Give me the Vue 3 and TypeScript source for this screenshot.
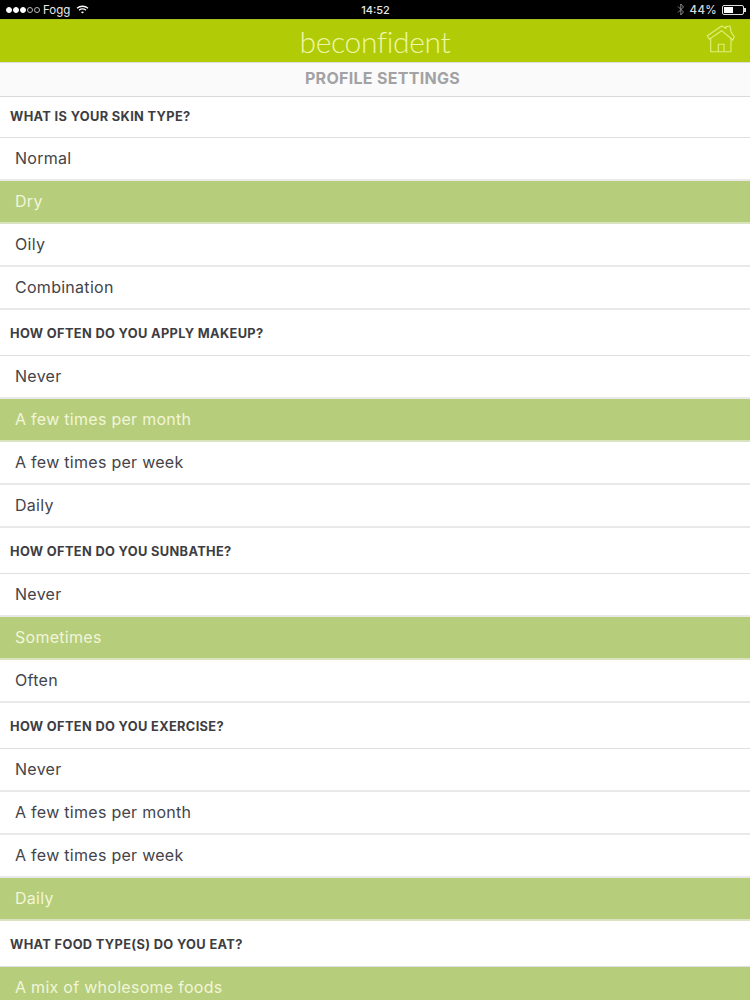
<script setup lang="ts">
interface Option { label: string; selected?: boolean }
interface Section { title: string; options: Option[] }

const sections: Section[] = [
  { title: 'WHAT IS YOUR SKIN TYPE?', options: [{ label: 'Normal' }, { label: 'Dry', selected: true }, { label: 'Oily' }, { label: 'Combination' }] },
  { title: 'HOW OFTEN DO YOU APPLY MAKEUP?', options: [{ label: 'Never' }, { label: 'A few times per month', selected: true }, { label: 'A few times per week' }, { label: 'Daily' }] },
  { title: 'HOW OFTEN DO YOU SUNBATHE?', options: [{ label: 'Never' }, { label: 'Sometimes', selected: true }, { label: 'Often' }] },
  { title: 'HOW OFTEN DO YOU EXERCISE?', options: [{ label: 'Never' }, { label: 'A few times per month' }, { label: 'A few times per week' }, { label: 'Daily', selected: true }] },
  { title: 'WHAT FOOD TYPE(S) DO YOU EAT?', options: [{ label: 'A mix of wholesome foods', selected: true }] },
]
</script>

<template>
  <div class="page">
    <div class="status">
      <div class="status-left">
        <span class="signal">
          <i class="dot on"></i><i class="dot on"></i><i class="dot on"></i><i class="dot"></i><i class="dot"></i>
        </span>
        <span>Fogg</span>
        <svg class="wifi" width="13" height="9" viewBox="0 0 13 9" fill="none" stroke="#fff" stroke-width="1.3">
          <path d="M1 3.2C4.2 .6 8.8 .6 12 3.2" />
          <path d="M3 5.2C5 3.7 8 3.7 10 5.2" />
          <path d="M6.5 8.6 4.9 7c1-.7 2.2-.7 3.2 0z" fill="#fff" stroke="none" />
        </svg>
      </div>
      <div class="status-time">14:52</div>
      <div class="status-right">
        <svg width="8" height="13" viewBox="0 0 8 13" fill="none" stroke="#8a8a8a" stroke-width="1">
          <path d="M1 3.5 6.5 9 3.8 12V1L6.5 4 1 9.5" />
        </svg>
        <span class="pct">44%</span>
        <span class="battery"><span class="battery-fill"></span></span>
      </div>
    </div>

    <header class="appbar">
      <div class="logo">beconfident</div>
      <svg class="home" width="30" height="30" viewBox="0 0 30 30" fill="none" stroke="#e4ee7c" stroke-width="1.1" stroke-linejoin="miter">
        <path d="M2.3 11.7 16.7 2 21 4.4V2.6L25 2 26 7.7 29.3 12.7 27.7 16 16.7 6.7 4.3 15.3Z" />
        <path d="M5.7 14V27.7H26V14.5" />
        <path d="M13.3 27.7V20.3H19V27.7" />
      </svg>
    </header>

    <div class="subtitle">PROFILE SETTINGS</div>

    <section v-for="(section, i) in sections" :key="section.title">
      <h2 class="question" :class="{ first: i === 0 }">{{ section.title }}</h2>
      <div
        v-for="option in section.options"
        :key="option.label"
        class="option"
        :class="{ selected: option.selected }"
      >{{ option.label }}</div>
    </section>
  </div>
</template>

<style>
html, body { margin: 0; background: #fff; overflow: hidden; }
</style>

<style scoped>
.page {
  width: 750px;
  height: 1000px;
  overflow: hidden;
  background: #fff;
  font-family: Inter, "Open Sans", "Liberation Sans", sans-serif;
  color: #3f3f44;
}
.status {
  height: 19px;
  background: #000;
  color: #e8e8e8;
  font-size: 11.5px;
  display: grid;
  grid-template-columns: 1fr auto 1fr;
  align-items: center;
  padding: 0 5px 0 6px;
}
.status-left { display: flex; align-items: center; gap: 3px; }
.signal { display: flex; gap: 1px; }
.dot { width: 6px; height: 6px; border-radius: 50%; border: 1px solid #bbb; box-sizing: border-box; }
.dot.on { background: #fff; border-color: #fff; }
.wifi { margin-left: 3px; }
.status-time { font-weight: 500; font-size: 11px; }
.status-right { display: flex; align-items: center; justify-content: flex-end; gap: 5px; }
.pct { font-weight: 500; font-size: 11.5px; letter-spacing: 0.3px; color: #ddd; }
.battery {
  width: 22px;
  height: 10px;
  border: 1px solid #ddd;
  border-radius: 2px;
  box-sizing: border-box;
  padding: 1px;
  position: relative;
  margin-right: 1px;
}
.battery::after {
  content: "";
  position: absolute;
  right: -3px;
  top: 2px;
  width: 2px;
  height: 4px;
  background: #ddd;
}
.battery-fill { display: block; width: 50%; height: 100%; background: #fff; }
.appbar {
  height: 42px;
  background: #b1cb06;
  border-top: 1px solid #a6bd12;
  display: flex;
  align-items: center;
  justify-content: center;
  position: relative;
}
.logo {
  font-family: Lato, "Open Sans", sans-serif;
  font-weight: 300;
  font-size: 30px;
  letter-spacing: -0.35px;
  color: #eef6a8;
  line-height: 42px;
}
.home { position: absolute; right: 15px; top: 4px; }
.subtitle {
  height: 34px;
  line-height: 33px;
  background: #fbfafa;
  border-bottom: 1px solid #d9d9d9;
  box-shadow: inset 0 1px 0 #ddd;
  text-align: center;
  font-size: 16px;
  letter-spacing: 0.3px;
  font-weight: 700;
  color: #a2a2a4;
  padding-left: 15px;
}
.question {
  margin: 0;
  height: 46px;
  line-height: 48px;
  padding-left: 10px;
  font-size: 12.8px;
  letter-spacing: 0.35px;
  font-weight: 700;
  color: #3d3d42;
  box-sizing: border-box;
  border-bottom: 1px solid #e0e0e0;
}
.question.first { height: 41px; line-height: 39px; }
.option {
  height: 43px;
  line-height: 41px;
  box-sizing: border-box;
  padding-left: 15px;
  font-size: 16px;
  letter-spacing: 0.28px;
  color: #44444a;
  border-bottom: 2px solid #e9e9e9;
}
.option.selected {
  background: #b6cd7b;
  color: #f1f6d8;
  border-bottom-color: #d9e3bd;
}
</style>
